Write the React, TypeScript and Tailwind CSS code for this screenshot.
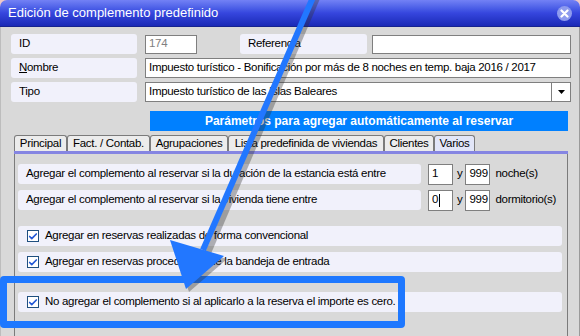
import { Check } from "lucide-react";

const FONT = "font-['Liberation_Sans',Arial,sans-serif] text-[11.5px] tracking-[-0.3px]";

function Label({ text, w, underline }: { text: string; w: string; underline?: boolean }) {
  return (
    <div className={`${w} h-full rounded-[3px] bg-[#f1f1fb] flex items-center pl-[8px] text-black whitespace-nowrap`}>
      {underline ? (
        <span>
          <span className="underline">{text[0]}</span>
          {text.slice(1)}
        </span>
      ) : (
        text
      )}
    </div>
  );
}

function Box({ children, w, muted }: { children?: React.ReactNode; w: string; muted?: boolean }) {
  return (
    <div
      className={`${w} h-full bg-white border border-[#7f7f7f] flex items-center pl-[3px] whitespace-nowrap ${
        muted ? "text-[#808080]" : "text-black"
      }`}
    >
      {children}
    </div>
  );
}

function CheckRow({ text }: { text: string }) {
  return (
    <div className="w-[544px] h-[20px] rounded-[3px] bg-[#f1f1fb] flex items-center pl-[9px] gap-[6px]">
      <div className="w-[12px] h-[12px] bg-white border border-[#1f4f7f] flex items-center justify-center">
        <Check className="w-[11px] h-[11px] text-[#2358d6]" strokeWidth={4} />
      </div>
      <span>{text}</span>
    </div>
  );
}

const tabs = [
  { name: "Principal", w: "w-[53px]" },
  { name: "Fact. / Contab.", w: "w-[83px]" },
  { name: "Agrupaciones", w: "w-[78px]" },
  { name: "Lista predefinida de viviendas", w: "w-[156px]" },
  { name: "Clientes", w: "w-[50px]" },
  { name: "Varios", w: "w-[41px]", active: true },
];

export default function App() {
  return (
    <div className={`w-[580px] h-[336px] relative overflow-hidden bg-[#eec8c8] ${FONT}`}>
      <div className="h-full flex flex-col rounded-t-[7px] overflow-hidden">
        {/* Title bar */}
        <div className="h-[27px] shrink-0 flex items-center justify-between pl-[8px] pr-[8px] bg-gradient-to-b from-[#7381f5] via-[#3646de] to-[#1a29b6] border-b border-[#16238f]">
          <span className="text-white text-[13px] tracking-normal">Edición de complemento predefinido</span>
          <div className="w-[15px] h-[15px] rounded-full bg-[#8e9bee] flex items-center justify-center">
            <svg width="9" height="9" viewBox="0 0 9 9">
              <path d="M1.5 1.5 L7.5 7.5 M7.5 1.5 L1.5 7.5" stroke="white" strokeWidth="2.2" strokeLinecap="round" />
            </svg>
          </div>
        </div>

        {/* Body */}
        <div className="flex-1 bg-[#d9d9d9] border-l border-[#bdbdbd] border-r border-r-[#9a9a9a] flex flex-col">
          <div className="pt-[7px] pl-[10px] flex flex-col gap-[4px]">
            <div className="h-[20px] flex items-center">
              <Label text="ID" w="w-[126px]" />
              <div className="ml-[8px] h-[19px]">
                <Box w="w-[52px]" muted>
                  174
                </Box>
              </div>
              <div className="ml-[43px] h-[20px]">
                <Label text="Referencia" w="w-[127px]" />
              </div>
              <div className="ml-[5px] h-[19px]">
                <Box w="w-[199px]" />
              </div>
            </div>
            <div className="h-[20px] flex">
              <Label text="Nombre" w="w-[126px]" underline />
              <div className="ml-[8px]">
                <Box w="w-[426px]">
                  Impuesto turístico - Bonificación por más de 8 noches en temp. baja 2016 / 2017
                </Box>
              </div>
            </div>
            <div className="h-[20px] flex">
              <Label text="Tipo" w="w-[126px]" />
              <div className="ml-[8px] w-[426px] h-full bg-white border border-[#7f7f7f] flex items-center">
                <span className="pl-[3px] flex-1 whitespace-nowrap">Impuesto turístico de las Islas Baleares</span>
                <div className="w-[19px] h-full border-l border-[#7f7f7f] flex items-center justify-center">
                  <svg width="7" height="4" viewBox="0 0 7 4">
                    <path d="M0 0 H7 L3.5 4 Z" fill="black" />
                  </svg>
                </div>
              </div>
            </div>
          </div>

          {/* Blue header */}
          <div className="mt-[9px] ml-[149px] w-[418px] h-[20px] bg-[#0080ff] text-white font-bold text-[12px] tracking-normal flex items-center justify-center">
            Parámetros para agregar automáticamente al reservar
          </div>

          {/* Tabs */}
          <div className="mt-[4px] ml-[13px] h-[16px] flex items-end">
            {tabs.map((t) => (
              <div
                key={t.name}
                className={`${t.w} h-[16px] border border-b-0 border-[#7b7b7b] rounded-t-[3px] flex items-center justify-center whitespace-nowrap ${
                  t.active ? "bg-[#e2e6f8]" : "bg-[#ececec]"
                }`}
              >
                {t.name}
              </div>
            ))}
          </div>
          <div className="ml-[13px] w-[554px] h-[3px] bg-[#8585e2]" />

          {/* Panel */}
          <div className="ml-[13px] w-[554px] flex-1 border-l border-r border-[#7b7b7b] pt-[10px] pl-[3px] flex flex-col">
            <div className="h-[20px] flex items-center">
              <Label text="Agregar el complemento al reservar si la duración de la estancia está entre" w="w-[403px]" />
              <div className="ml-[7px] h-[21px]">
                <Box w="w-[25px]">1</Box>
              </div>
              <span className="ml-[4px]">y</span>
              <div className="ml-[3px] h-[21px]">
                <Box w="w-[25px]">999</Box>
              </div>
              <span className="ml-[5px]">noche(s)</span>
            </div>
            <div className="mt-[6px] h-[20px] flex items-center">
              <Label text="Agregar el complemento al reservar si la vivienda tiene entre" w="w-[403px]" />
              <div className="ml-[7px] h-[21px]">
                <Box w="w-[25px]">
                  0<span className="inline-block w-px h-[13px] bg-black ml-px" />
                </Box>
              </div>
              <span className="ml-[4px]">y</span>
              <div className="ml-[3px] h-[21px]">
                <Box w="w-[25px]">999</Box>
              </div>
              <span className="ml-[5px]">dormitorio(s)</span>
            </div>
            <div className="mt-[16px]">
              <CheckRow text="Agregar en reservas realizadas de forma convencional" />
            </div>
            <div className="mt-[6px]">
              <CheckRow text="Agregar en reservas procedentes de la bandeja de entrada" />
            </div>
            <div className="mt-[20px]">
              <CheckRow text="No agregar el complemento si al aplicarlo a la reserva el importe es cero." />
            </div>
          </div>
        </div>
      </div>

      {/* Annotation: highlight box */}
      <div className="absolute left-0 top-[276px] w-[405px] h-[52px] border-[7px] border-[#1e78ff] rounded-[4px]" />

      {/* Annotation: arrow */}
      <svg className="absolute left-0 top-0 pointer-events-none" width="580" height="336" viewBox="0 0 580 336">
        <g opacity="0.35" transform="translate(3 3)">
          <line x1="314" y1="-5" x2="205" y2="250" stroke="#303030" strokeWidth="6" />
          <polygon points="186,289 170,240 224,256" fill="#303030" />
        </g>
        <line x1="314" y1="-5" x2="203" y2="250" stroke="#2277ff" strokeWidth="6" />
        <polygon points="186,289 170,240 224,256" fill="#2277ff" />
      </svg>
    </div>
  );
}
